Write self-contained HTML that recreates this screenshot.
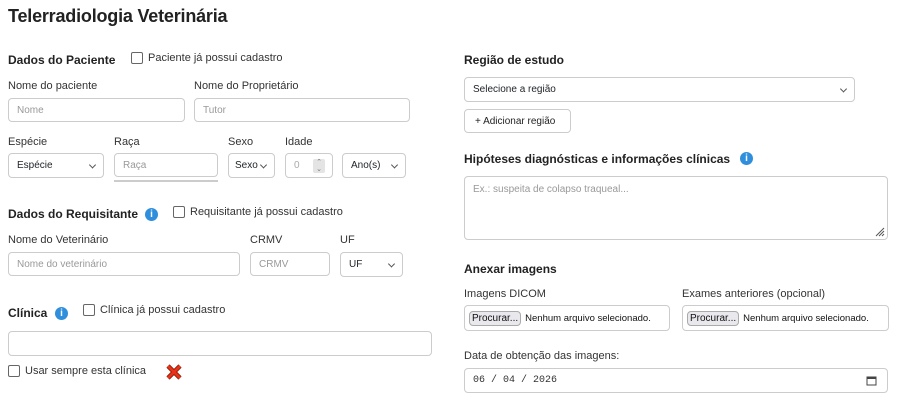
<!DOCTYPE html>
<html><head><meta charset="utf-8"><style>
*{box-sizing:border-box;margin:0;padding:0}
body{width:903px;height:409px;background:#fff;font-family:"Liberation Sans",sans-serif;color:#212529;position:relative;overflow:hidden;font-size:11px}
.a{position:absolute;white-space:nowrap}
h1{position:absolute;left:8px;top:6px;font-size:18px;font-weight:bold;color:#222;letter-spacing:-0.2px}
.h{font-weight:bold;font-size:12px;color:#222}
.l{font-size:11px;color:#333}
.box{position:absolute;border:1px solid #ccc;border-radius:4px;background:#fff;font-size:10px;color:#999;padding-left:8px;display:flex;align-items:center;white-space:nowrap}
.sel{color:#212529}
.sel:after{content:"";position:absolute;right:8px;top:50%;width:4px;height:4px;border-right:1px solid #555;border-bottom:1px solid #555;transform:translateY(-70%) rotate(45deg)}
.cb{position:absolute;width:12px;height:12px;border:1px solid #666;border-radius:2px;background:#fff}
.info{position:absolute;width:13px;height:13px;border-radius:50%;background:#2f8fdc;color:#fff;font-size:10px;font-weight:bold;text-align:center;line-height:13px}
.btn{border:1px solid #aaa;border-radius:4px;background:#e9e9ed;font-size:10px;color:#111;padding:1px 2px;margin-right:4px}
</style></head><body>
<h1>Telerradiologia Veterinária</h1>

<div class="a h" style="left:8px;top:53px">Dados do Paciente</div>
<div class="cb" style="left:131px;top:52px"></div>
<div class="a l" style="left:148px;top:52px">Paciente já possui cadastro</div>
<div class="a l" style="left:8px;top:80px">Nome do paciente</div>
<div class="a l" style="left:194px;top:80px">Nome do Proprietário</div>
<div class="box" style="left:8px;top:98px;width:177px;height:24px">Nome</div>
<div class="box" style="left:194px;top:98px;width:216px;height:24px">Tutor</div>

<div class="a l" style="left:8px;top:136px">Espécie</div>
<div class="a l" style="left:114px;top:136px">Raça</div>
<div class="a l" style="left:228px;top:136px">Sexo</div>
<div class="a l" style="left:285px;top:136px">Idade</div>
<div class="box sel" style="left:8px;top:153px;width:96px;height:25px">Espécie</div>
<div class="box" style="left:114px;top:153px;width:104px;height:24px">Raça</div>
<div class="a" style="left:114px;top:180px;width:104px;height:2px;background:#ccc"></div>
<div class="box sel" style="left:228px;top:153px;width:47px;height:25px;padding-left:6px">Sexo</div>
<div class="box" style="left:285px;top:153px;width:48px;height:25px;color:#aaa">0<div class="a" style="left:27px;top:5px;width:12px;height:14px;background:#e4e4e4;border-radius:2px;font-size:7px;color:#777;text-align:center;line-height:7px">⌃<br>⌄</div></div>
<div class="box sel" style="left:342px;top:153px;width:64px;height:25px">Ano(s)</div>

<div class="a h" style="left:8px;top:207px">Dados do Requisitante</div>
<div class="info" style="left:145px;top:208px">i</div>
<div class="cb" style="left:173px;top:206px"></div>
<div class="a l" style="left:190px;top:206px">Requisitante já possui cadastro</div>
<div class="a l" style="left:8px;top:234px">Nome do Veterinário</div>
<div class="a l" style="left:250px;top:234px">CRMV</div>
<div class="a l" style="left:340px;top:234px">UF</div>
<div class="box" style="left:8px;top:252px;width:232px;height:24px">Nome do veterinário</div>
<div class="box" style="left:250px;top:252px;width:80px;height:24px">CRMV</div>
<div class="box sel" style="left:340px;top:252px;width:63px;height:25px">UF</div>

<div class="a h" style="left:8px;top:306px">Clínica</div>
<div class="info" style="left:55px;top:307px">i</div>
<div class="cb" style="left:83px;top:304px"></div>
<div class="a l" style="left:100px;top:304px">Clínica já possui cadastro</div>
<div class="box" style="left:8px;top:331px;width:424px;height:25px"></div>
<div class="cb" style="left:8px;top:365px"></div>
<div class="a l" style="left:25px;top:365px">Usar sempre esta clínica</div>
<svg class="a" style="left:166px;top:364px" width="16" height="16" viewBox="0 0 16 16"><path d="M2 2L14 14M14 2L2 14" stroke="#8a1a00" stroke-width="4.5"/><path d="M2 2L14 14M14 2L2 14" stroke="#e8321a" stroke-width="2.8"/></svg>

<div class="a h" style="left:464px;top:53px">Região de estudo</div>
<div class="box sel" style="left:464px;top:77px;width:391px;height:25px">Selecione a região</div>
<div class="box" style="left:464px;top:109px;width:107px;height:24px;color:#222;padding-left:10px">+ Adicionar região</div>
<div class="a h" style="left:464px;top:152px">Hipóteses diagnósticas e informações clínicas</div>
<div class="info" style="left:740px;top:152px">i</div>
<div class="box" style="left:464px;top:176px;width:424px;height:64px;align-items:flex-start;padding-top:7px">Ex.: suspeita de colapso traqueal...<svg class="a" style="right:2px;bottom:2px" width="10" height="10"><path d="M9 1L1 9M9 4L4 9M9 7L7 9" stroke="#555"/></svg></div>
<div class="a h" style="left:464px;top:262px">Anexar imagens</div>
<div class="a l" style="left:464px;top:288px">Imagens DICOM</div>
<div class="a l" style="left:682px;top:288px">Exames anteriores (opcional)</div>
<div class="box" style="left:464px;top:305px;width:206px;height:26px;color:#111;padding-left:4px;font-size:9.5px"><span class="btn">Procurar...</span>Nenhum arquivo selecionado.</div>
<div class="box" style="left:682px;top:305px;width:207px;height:26px;color:#111;padding-left:4px;font-size:9.5px"><span class="btn">Procurar...</span>Nenhum arquivo selecionado.</div>
<div class="a l" style="left:464px;top:350px">Data de obtenção das imagens:</div>
<div class="box" style="left:464px;top:368px;width:424px;height:25px;color:#333;font-family:'Liberation Mono',monospace;font-size:10px">06 / 04 / 2026<svg class="a" style="right:10px;top:6px" width="11" height="11"><rect x="1" y="2" width="9" height="8" fill="none" stroke="#444"/><rect x="1" y="2" width="9" height="2" fill="#444"/></svg></div>
</body></html>
